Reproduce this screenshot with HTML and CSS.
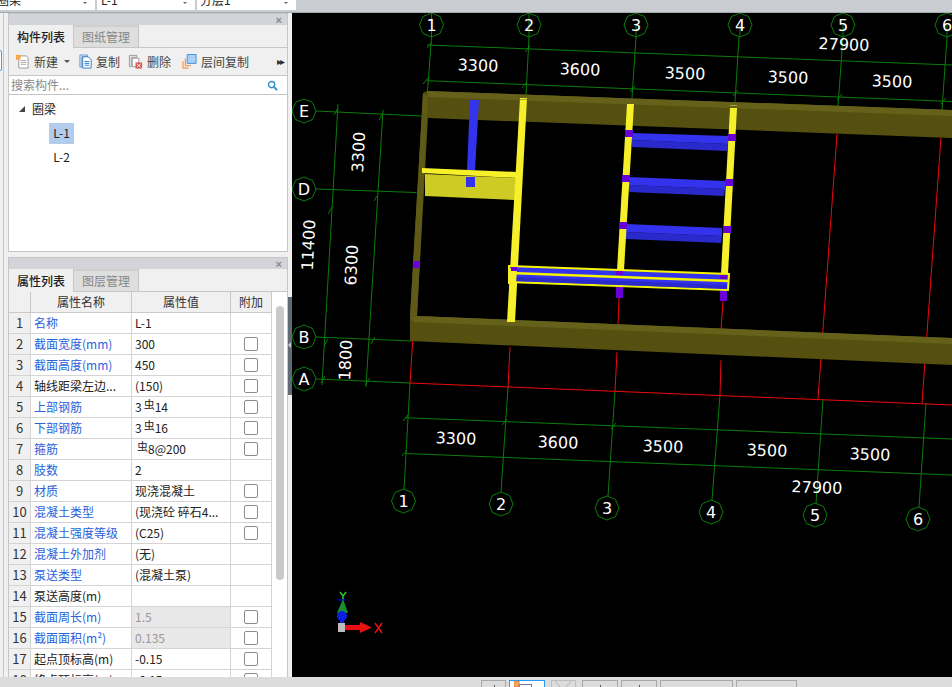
FILE: index.html
```html
<!DOCTYPE html>
<html lang="zh-CN">
<head>
<meta charset="utf-8">
<title>构件列表</title>
<link rel="stylesheet" href="styles.css">
</head>
<body>
<div class="app">
  <header class="topbar">
    <div class="combo c1"><span class="combo-text">圈梁</span><i class="caret"></i></div>
    <div class="combo c2"><span class="combo-text">L-1</span><i class="caret"></i></div>
    <div class="combo c3"><span class="combo-text">分层1</span><i class="caret"></i></div>
  </header>
  <div class="main">
    <aside class="side">
      <span class="edge-btn"></span>
      <section class="panel panel-top">
        <div class="titlebar"><span class="close">×</span></div>
        <div class="tabs"><span class="tab active">构件列表</span><span class="tab">图纸管理</span></div>
        <div class="toolbar">
          <span class="tool">
            <svg class="ico" viewBox="0 0 16 16"><path d="M4 2h8l2 2v11H4z" fill="#fff" stroke="#999"/><path d="M6 7h6M6 9h6M6 11h6" stroke="#aaa"/><path d="M1 1h5v5H1z" fill="#f6a13a"/><path d="M2 2h1v1H2zM4 4h1v1H4z" fill="#ffe9b0"/></svg>新建<i class="tool-caret"></i>
          </span>
          <span class="tool t2">
            <svg class="ico" viewBox="0 0 16 16"><path d="M2 1h8v2H4v11H2z" fill="#dbe8f6" stroke="#4a86c8" stroke-width=".8"/><path d="M5 3h6l3 3v9H5z" fill="#fff" stroke="#2f78c4"/><path d="M7 8h5M7 10h5M7 12h5" stroke="#2f78c4"/></svg>复制
          </span>
          <span class="tool">
            <svg class="ico" viewBox="0 0 16 16"><path d="M1.500 1.500h8v2h-6v10h-2z" fill="#eee" stroke="#999"/><path d="M4.500 4.500h7v9h-7z" fill="#fff" stroke="#999"/><path d="M8 9h7v6.500H8z" fill="#d9534f"/><path d="M9.500 10.500l4 3.500m0-3.500l-4 3.500" stroke="#fff"/></svg>删除
          </span>
          <span class="tool t4">
            <svg class="ico" viewBox="0 0 16 16"><path d="M1 7.500v7.500h6M3.500 5v7.500h6" fill="none" stroke="#f07d22"/><path d="M5.500.500h9.500v9.500H5.500z" fill="#a9d0f5" stroke="#3f8fdc"/></svg>层间复制
          </span>
          <span class="more">▸▸</span>
        </div>
        <div class="search">
          <span class="search-text">搜索构件...</span>
          <svg class="search-ico" viewBox="0 0 12 12"><circle cx="5" cy="5" r="3.400" fill="none" stroke="#2f8ed0" stroke-width="1.500"/><path d="M7.500 7.500l3.500 3.500" stroke="#2f8ed0" stroke-width="2"/></svg>
        </div>
        <div class="tree">
          <div class="tree-root"><i class="tree-arrow"></i>圈梁</div>
          <div class="tree-leaf selected">L-1</div>
          <div class="tree-leaf">L-2</div>
        </div>
      </section>
      <section class="panel panel-bottom">
        <div class="titlebar"><span class="close">×</span></div>
        <div class="tabs"><span class="tab active">属性列表</span><span class="tab">图层管理</span></div>
        <div class="table-wrap">
          <table class="props">
            <thead><tr><th class="num"></th><th class="c-name">属性名称</th><th class="c-val">属性值</th><th class="c-add">附加</th></tr></thead>
            <tbody>
              <tr><td class="num">1</td><td class="link">名称</td><td>L-1</td><td></td></tr>
              <tr><td class="num">2</td><td class="link">截面宽度(mm)</td><td>300</td><td class="chk"><i></i></td></tr>
              <tr><td class="num">3</td><td class="link">截面高度(mm)</td><td>450</td><td class="chk"><i></i></td></tr>
              <tr><td class="num">4</td><td>轴线距梁左边...</td><td>(150)</td><td class="chk"><i></i></td></tr>
              <tr><td class="num">5</td><td class="link">上部钢筋</td><td>3<span class="bar">虫</span>14</td><td class="chk"><i></i></td></tr>
              <tr><td class="num">6</td><td class="link">下部钢筋</td><td>3<span class="bar">虫</span>16</td><td class="chk"><i></i></td></tr>
              <tr><td class="num">7</td><td class="link">箍筋</td><td><span class="bar">虫</span>8@200</td><td class="chk"><i></i></td></tr>
              <tr><td class="num">8</td><td class="link">肢数</td><td>2</td><td></td></tr>
              <tr><td class="num">9</td><td class="link">材质</td><td>现浇混凝土</td><td class="chk"><i></i></td></tr>
              <tr><td class="num">10</td><td class="link">混凝土类型</td><td>(现浇砼 碎石4...</td><td class="chk"><i></i></td></tr>
              <tr><td class="num">11</td><td class="link">混凝土强度等级</td><td>(C25)</td><td class="chk"><i></i></td></tr>
              <tr><td class="num">12</td><td class="link">混凝土外加剂</td><td>(无)</td><td></td></tr>
              <tr><td class="num">13</td><td class="link">泵送类型</td><td>(混凝土泵)</td><td></td></tr>
              <tr><td class="num">14</td><td>泵送高度(m)</td><td></td><td></td></tr>
              <tr><td class="num">15</td><td class="link">截面周长(m)</td><td class="ro">1.5</td><td class="chk"><i></i></td></tr>
              <tr><td class="num">16</td><td class="link">截面面积(m²)</td><td class="ro">0.135</td><td class="chk"><i></i></td></tr>
              <tr><td class="num">17</td><td>起点顶标高(m)</td><td>-0.15</td><td class="chk"><i></i></td></tr>
              <tr><td class="num">18</td><td>终点顶标高(m)</td><td>-0.15</td><td class="chk"><i></i></td></tr>
            </tbody>
          </table>
          <div class="scrollbar"><div class="thumb"></div></div>
        </div>
      </section>
      <div class="splitter"></div>
    </aside>
    <div class="canvas">
      <svg class="drawing" viewBox="292 13 660 664" width="660" height="664">
        <g class="axis">
          <path d="M431.500 37L427.500 92M529 37L526 96M636 37L632 98M739 37L735 102M843 37L838 106M947 37L942 110"/>
          <path d="M410 383L404 489M508 387L501 492M615 391L608 496M720 395L712 500M823 399L816 503M926 403L919 507"/>
          <path d="M316 111L421.500 116M316 189L416.500 192.500M316 337L411.500 341M316 379L410 383"/>
          <path d="M338 104L322 385M383 110L366 387"/>
          <path d="M427 45L952 65M427 80.700L952 101.500"/>
          <path d="M405 417.700L952 439M405 453.500L952 475"/>
          <path d="M338 108l-4 7m49-2l-4 7M332 207l-4 7m49-18l-3 5M328 339l-4 7m51-9l-4 7M325 376l-4 7m49-5l-5 7"/>
          <path d="M432 42l-5 6M530 46l-5 6M428 78l-5 6M527 82l-5 6M635 86l-5 6M738 90l-5 6M842 94l-5 6M946 98l-5 6"/>
          <path d="M408 415l-5 6M507 419l-5 6M616 423l-5 6M407 450l-5 6"/>
        </g>
        <g class="redline">
          <path d="M837 134L818 399M941 137L922 403M619 298L618 325M723 301L721 329M412.700 341L410 383M510 347L508 387M617 352L615 391M721 360L720 395"/>
          <path d="M410 383L952 405"/>
        </g>

        <polygon class="olive-main" points="423,93 427,91 952,110 952,138 428,118 417,316 410,317"/>
        <polygon class="olive-light" points="427,91 952,110 952,116 428,97"/>
        <polygon class="olive-side" points="423,93 428,97 417,316 410,317"/>
        <polygon class="olive-main" points="410,317 417,316 952,338 952,365 410,341"/>
        <polygon class="olive-light" points="410,317 417,316 952,338 952,344 414,322"/>

        <polygon class="blue-dark" points="632,140 728,144 727,151 632,147"/>
        <polygon class="blue" points="632,133 728,136 728,144 632,140"/>
        <polygon class="blue-dark" points="629,185 725,189 724,196 629,192"/>
        <polygon class="blue" points="629,177 725,181 725,189 629,185"/>
        <polygon class="blue-dark" points="626,232 722,236 721,243 626,239"/>
        <polygon class="blue" points="626,224 722,228 722,236 626,232"/>
        <polygon class="blue" points="470,100 479,100 475,170 467,170"/>

        <polygon class="slab" points="425,174 516,178 515,200 425,196"/>
        <polygon class="yellow" points="422,168 517,172 517,178 422,173"/>
        <rect class="blue" x="466" y="177" width="9" height="10"/>

        <polygon class="yellow" points="520,98 527,98 515,322 507,322"/>
        <polygon class="yellow" points="627,104 634,104 624,270 617,270"/>
        <polygon class="yellow" points="730,108 737,108 728,274 721,274"/>
        <path class="cap" d="M520 99.500h7M730 105.500h7"/>

        <polygon class="purple" points="414,261 420,261 419,268 413,268"/>
        <g class="purple">
          <rect x="625" y="130" width="8" height="7"/>
          <rect x="622" y="175" width="8" height="7"/>
          <rect x="619" y="222" width="8" height="7"/>
          <rect x="728" y="134" width="8" height="7"/>
          <rect x="725" y="179" width="8" height="7"/>
          <rect x="723" y="226" width="8" height="7"/>
          <rect x="616" y="287" width="7" height="11"/>
          <rect x="720" y="290" width="7" height="11"/>
        </g>

        <polygon class="selected-beam" points="509,266 729,274 728,290 509,282"/>
        <polygon class="blue-dark" points="516,277 727,285 727,289 516,281"/>
        <path class="sel-line" d="M510 273L729 281"/>
        <polygon class="yellow" points="508,268 517,269 516,284 508,284"/>
        <rect class="purple" x="511" y="267" width="6" height="4"/>
        <rect class="purple" x="616" y="271" width="7" height="4"/>
        <rect class="purple" x="720" y="275" width="7" height="4"/>

        <g class="heads">
          <polygon points="431.500,13 440,16.500 443.500,25 440,33.500 431.500,37 423,33.500 419.500,25 423,16.500"/>
          <polygon points="529,13 537.500,16.500 541,25 537.500,33.500 529,37 520.500,33.500 517,25 520.500,16.500"/>
          <polygon points="636,13 644.500,16.500 648,25 644.500,33.500 636,37 627.500,33.500 624,25 627.500,16.500"/>
          <polygon points="740,13 748.500,16.500 752,25 748.500,33.500 740,37 731.500,33.500 728,25 731.500,16.500"/>
          <polygon points="843,13 851.500,16.500 855,25 851.500,33.500 843,37 834.500,33.500 831,25 834.500,16.500"/>
          <polygon points="947,13 955.500,16.500 959,25 955.500,33.500 947,37 938.500,33.500 935,25 938.500,16.500"/>
          <polygon points="403.500,489 412,492.500 415.500,501 412,509.500 403.500,513 395,509.500 391.500,501 395,492.500"/>
          <polygon points="501,492 509.500,495.500 513,504 509.500,512.500 501,516 492.500,512.500 489,504 492.500,495.500"/>
          <polygon points="607,496 615.500,499.500 619,508 615.500,516.500 607,520 598.500,516.500 595,508 598.500,499.500"/>
          <polygon points="711,500 719.500,503.500 723,512 719.500,520.500 711,524 702.500,520.500 699,512 702.500,503.500"/>
          <polygon points="815,503 823.500,506.500 827,515 823.500,523.500 815,527 806.500,523.500 803,515 806.500,506.500"/>
          <polygon points="918,507 926.500,510.500 930,519 926.500,527.500 918,531 909.500,527.500 906,519 909.500,510.500"/>
          <polygon points="304,99 312.500,102.500 316,111 312.500,119.500 304,123 295.500,119.500 292,111 295.500,102.500"/>
          <polygon points="304,177 312.500,180.500 316,189 312.500,197.500 304,201 295.500,197.500 292,189 295.500,180.500"/>
          <polygon points="304,325 312.500,328.500 316,337 312.500,345.500 304,349 295.500,345.500 292,337 295.500,328.500"/>
          <polygon points="304,367 312.500,370.500 316,379 312.500,387.500 304,391 295.500,387.500 292,379 295.500,370.500"/>
        </g>
        <path class="axis-over" d="M431.500 13V37M529 13V37M636 25V37M740 25V37M843 25V37M947 25V37"/>
        <g class="labels">
          <text x="431.500" y="31">1</text><text x="529" y="31">2</text><text x="636" y="31">3</text><text x="740" y="31">4</text><text x="843" y="31">5</text><text x="947" y="31">6</text>
          <text x="403.500" y="507">1</text><text x="501" y="510">2</text><text x="607" y="514">3</text><text x="711" y="518">4</text><text x="815" y="521">5</text><text x="918" y="525">6</text>
          <text x="304" y="117">E</text><text x="304" y="195">D</text><text x="304" y="343">B</text><text x="304" y="385">A</text>
        </g>
        <g class="dims">
          <text x="844" y="50" transform="rotate(2 844 44)">27900</text>
          <text x="478" y="71" transform="rotate(2 478 65)">3300</text>
          <text x="580" y="75" transform="rotate(2 580 69)">3600</text>
          <text x="685" y="79" transform="rotate(2 685 73)">3500</text>
          <text x="788" y="83" transform="rotate(2 788 77)">3500</text>
          <text x="892" y="87" transform="rotate(2 892 81)">3500</text>
          <text x="456" y="444" transform="rotate(2 456 438)">3300</text>
          <text x="558" y="448" transform="rotate(2 558 442)">3600</text>
          <text x="663" y="452" transform="rotate(2 663 446)">3500</text>
          <text x="767" y="456" transform="rotate(2 767 450)">3500</text>
          <text x="870" y="460" transform="rotate(2 870 454)">3500</text>
          <text x="817" y="493" transform="rotate(2 817 487)">27900</text>
          <text x="358" y="158" transform="rotate(-87 358 152)">3300</text>
          <text x="351" y="271" transform="rotate(-87 351 265)">6300</text>
          <text x="345" y="366" transform="rotate(-87 345 360)">1800</text>
          <text x="308" y="251" transform="rotate(-87 308 245)">11400</text>
        </g>
        <g class="triad">
          <path class="tri-y" d="M340 592l3 4 3-4M343 596v4"/>
          <path class="tri-blue" d="M338 600h7" />
          <polygon class="tri-cone" points="343,599 348,613 337,613"/>
          <circle class="tri-ball" cx="342" cy="616" r="5"/>
          <rect class="tri-blue-fill" x="340" y="618" width="4" height="6"/>
          <rect class="tri-box" x="338" y="623" width="7" height="9"/>
          <polygon class="tri-red" points="345,625 360,625 360,622 372,627.500 360,633 360,630 345,630"/>
          <path class="tri-x" d="M375 623l7 10m0-10l-7 10"/>
        </g>
      </svg>
    </div>
  </div>
  <footer class="statusbar">
    <span class="sb s1"></span>
    <span class="sb s2"><svg class="sb-ico" viewBox="0 0 18 8"><rect x="5.500" y="3.500" width="12" height="8" fill="none" stroke="#5f83ad"/><rect x="0" y="0" width="5" height="6" fill="#f6a765" stroke="#d98033"/></svg></span>
    <span class="sb s3"><svg class="sb-ico" viewBox="0 0 18 8"><path d="M1 0l5 6M17 0l-5 6" fill="none" stroke="#b5b5b5"/></svg></span>
    <span class="sb s4"></span>
    <span class="sb s5"></span>
    <span class="sb s6"></span>
    <span class="sb s7"></span>
  </footer>
</div>
</body>
</html>
```
FILE: styles.css
```css
* { box-sizing: border-box; }
html, body { margin: 0; padding: 0; }
body {
  width: 952px;
  height: 687px;
  overflow: hidden;
  background: #f0f0f0;
  font: 12px/1 "Noto Sans CJK SC", "Liberation Sans", sans-serif;
  color: #222;
}
.app { display: flex; flex-direction: column; width: 952px; height: 687px; }

.topbar {
  flex: 0 0 13px;
  display: flex;
  gap: 2px;
  background: #c9cdd2;
  border-bottom: 1px solid #a5a8ad;
  overflow: hidden;
}
.combo {
  height: 10px;
  background: #fff;
  display: flex;
  justify-content: space-between;
  align-items: flex-end;
  padding: 0 8px 0 0;
  overflow: hidden;
  flex: none;
}
.c1 { width: 95px; }
.c2 { width: 98px; }
.c3 { width: 99px; }
.combo-text { line-height: 20px; height: 20px; flex: none; padding-left: 4px; }
.c1 .combo-text { padding-left: 0; margin-left: -3px; }
.c3 .combo-text { padding-left: 3px; }
.caret { width: 0; height: 0; border: 2px solid transparent; border-top-color: #666; margin-bottom: 4px; }

.main { flex: 1 1 auto; display: flex; min-height: 0; }
.side {
  position: relative;
  flex: 0 0 292px;
  display: flex;
  flex-direction: column;
  gap: 5px;
  padding: 0 4px 0 8px;
  background: #f0f0f0;
  overflow: hidden;
}
.side::before {
  content: "";
  position: absolute;
  left: 3px;
  top: 0;
  bottom: 0;
  width: 1px;
  background: #c8c8c8;
}
.edge-btn {
  position: absolute;
  left: -3px;
  top: 37px;
  width: 5px;
  height: 21px;
  border: 1px solid #4a9be0;
  border-radius: 2px;
  background: #fff;
}
.panel { border: 1px solid #c6c6c6; background: #f0f0f0; display: flex; flex-direction: column; width: 280px; }
.panel-top { flex: 0 0 239px; background: #fff; }
.panel-bottom { flex: 1 1 auto; min-height: 0; border-bottom: 0; }

.titlebar {
  flex: 0 0 11px;
  background: #d2d4d9;
  display: flex;
  justify-content: flex-end;
  align-items: center;
  padding-right: 5px;
}
.close { font: 700 11px/10px "Liberation Sans", sans-serif; color: #888; }

.tabs {
  flex: 0 0 23px;
  display: flex;
  background: #f0f0f0;
  border-bottom: 1px solid #c6c6c6;
}
.tab {
  width: 65px;
  display: flex;
  align-items: center;
  justify-content: center;
  font-size: 12px;
  color: #888;
  background: #dedede;
  border-top: 2px solid #cfcfcf;
  border-right: 1px solid #c6c6c6;
}
.tab.active { color: #222; font-weight: 500; background: #f0f0f0; border-top: 0; margin-bottom: -1px; }

.toolbar {
  flex: 0 0 28px;
  display: flex;
  align-items: center;
  gap: 8px;
  padding-left: 6px;
  background: #f0f0f0;
  border-bottom: 1px solid #c6c6c6;
  color: #444;
  position: relative;
}
.tool { display: flex; align-items: center; gap: 4px; white-space: nowrap; }
.t2 { gap: 3px; }
.t4 { margin-left: 3px; }
.ico { width: 15px; height: 15px; display: block; flex: none; }
.tool-caret { width: 0; height: 0; border: 3px solid transparent; border-top-color: #555; margin: 3px 0 0 2px; }
.more { position: absolute; right: 4px; font: 10px/10px "DejaVu Sans", sans-serif; letter-spacing: -2px; color: #333; }

.search {
  flex: 0 0 19px;
  display: flex;
  align-items: center;
  justify-content: space-between;
  padding: 0 9px 0 2px;
  background: #fff;
  border-bottom: 1px solid #c6c6c6;
  color: #888;
}
.search-ico { width: 11px; height: 11px; display: block; }

.tree { flex: 1 1 auto; background: #fff; padding-top: 2px; }
.tree-root { display: flex; align-items: center; height: 24px; margin-bottom: 2px; padding-left: 23px; position: relative; }
.tree-arrow {
  position: absolute;
  left: 10px;
  top: 9px;
  width: 0;
  height: 0;
  border-bottom: 6px solid #444;
  border-left: 6px solid transparent;
}
.tree-leaf { margin-left: 40px; width: 25px; height: 21px; line-height: 19px; text-align: center; margin-bottom: 3px; }
.tree-leaf.selected { background: #b1ccec; }

.table-wrap { flex: 1 1 auto; display: flex; min-height: 0; overflow: hidden; background: #fff; }
.props { border-collapse: separate; border-spacing: 0; table-layout: fixed; width: 263px; flex: none; align-self: flex-start; }
.props th, .props td {
  height: 21px;
  padding: 0 3px 1px;
  border: 0 solid #d4d4d4;
  border-width: 0 1px 1px 0;
  font-weight: 400;
  overflow: hidden;
  white-space: nowrap;
  text-align: left;
  line-height: 18px;
}
.props th { background: #f0f0f0; text-align: center; color: #333; border-color: #c9c9c9; }
.props th.num { width: 22px; }
.props th.c-name { width: 101px; }
.props th.c-val { width: 99px; }
.props th.c-add { width: 41px; }
.props td.num { background: #f0f0f0; text-align: center; color: #333; padding: 0 0 1px; font-size: 13px; }
.props td.link { color: #2a62dc; }
.props td.ro { background: #e8e8e8; color: #999; }
.props td.chk { text-align: center; padding: 0; }
.chk i { display: block; width: 14px; height: 14px; margin: 0 auto; border: 1px solid #8c8c8c; border-radius: 2px; background: #fff; }
.bar { font-size: 11px; vertical-align: 3px; margin: 0 0 0 2px; line-height: 1; }

.scrollbar { flex: 1 1 auto; background: #fff; padding: 14px 3px 0 4px; }
.thumb { height: 274px; background: #c9c9c9; border-radius: 4px; }

.splitter {
  position: absolute;
  right: 0;
  top: 284px;
  width: 4px;
  height: 98px;
  background: #5f6a75;
}
.splitter::after {
  content: "";
  position: absolute;
  left: 0;
  top: 45px;
  border: 3px solid transparent;
  border-right-color: #c4c8cc;
  border-left-width: 0;
}

.canvas { flex: 1 1 auto; background: #000; overflow: hidden; }
.drawing { display: block; }
.axis path, .axis-over { fill: none; stroke: #0a7d0a; stroke-width: 1; }
.redline path { fill: none; stroke: #ee0a0a; stroke-width: 1; }
.olive-main { fill: #55500f; }
.olive-light { fill: #66611a; }
.olive-side { fill: #5f5b16; }
.blue { fill: #3333ee; }
.blue-dark { fill: #2a2acc; }
.slab { fill: #cfcb25; }
.yellow { fill: #f5f02a; }
.cap { stroke: #a7a330; stroke-width: 1; fill: none; }
.purple { fill: #6a00d8; }
.selected-beam { fill: #3333ee; stroke: #f5f500; stroke-width: 2; }
.sel-line { stroke: #f5f500; stroke-width: 2.500; fill: none; }
.heads polygon { fill: #000; stroke: #0a7d0a; stroke-width: 1; }
.labels text, .dims text {
  fill: #fff;
  text-anchor: middle;
  font-family: "DejaVu Sans", "Open Sans", sans-serif;
}
.labels text { font-size: 16px; }
.dims text { font-size: 16px; }
.tri-y { fill: none; stroke: #22cc22; stroke-width: 1.500; }
.tri-blue { stroke: #0000dd; stroke-width: 1.500; }
.tri-cone { fill: #1a8f2e; }
.tri-ball { fill: #0a1fe0; }
.tri-blue-fill { fill: #0a1fe0; }
.tri-box { fill: #bcbcbc; }
.tri-red { fill: #e81010; }
.tri-x { fill: none; stroke: #e81010; stroke-width: 1.500; }

.statusbar {
  flex: 0 0 10px;
  display: flex;
  align-items: flex-start;
  background: #dcdcdc;
  padding: 3px 0 0 481px;
  overflow: hidden;
}
.sb { display: block; position: relative; height: 10px; border: 1px solid #a8a8a8; border-bottom: 0; flex: none; background: #dcdcdc; margin-right: 3px; }
.s1 { width: 25px; }
.s2 { width: 36px; background: #fff; border: 1px solid #2b9af3; border-bottom: 0; margin-right: 6px; padding-left: 4px; }
.sb-ico { display: block; width: 18px; height: 8px; }
.s3 { width: 25px; margin-right: 6px; padding-left: 2px; border-color: #bdbdbd; }
.s4 { width: 36px; }
.s5 { width: 36px; }
.s6 { width: 73px; }
.s7 { width: 61px; }
.s1::after, .s4::after, .s5::after {
  content: "";
  position: absolute;
  left: 50%;
  top: 4px;
  width: 1px;
  height: 3px;
  background: #555;
}
```
